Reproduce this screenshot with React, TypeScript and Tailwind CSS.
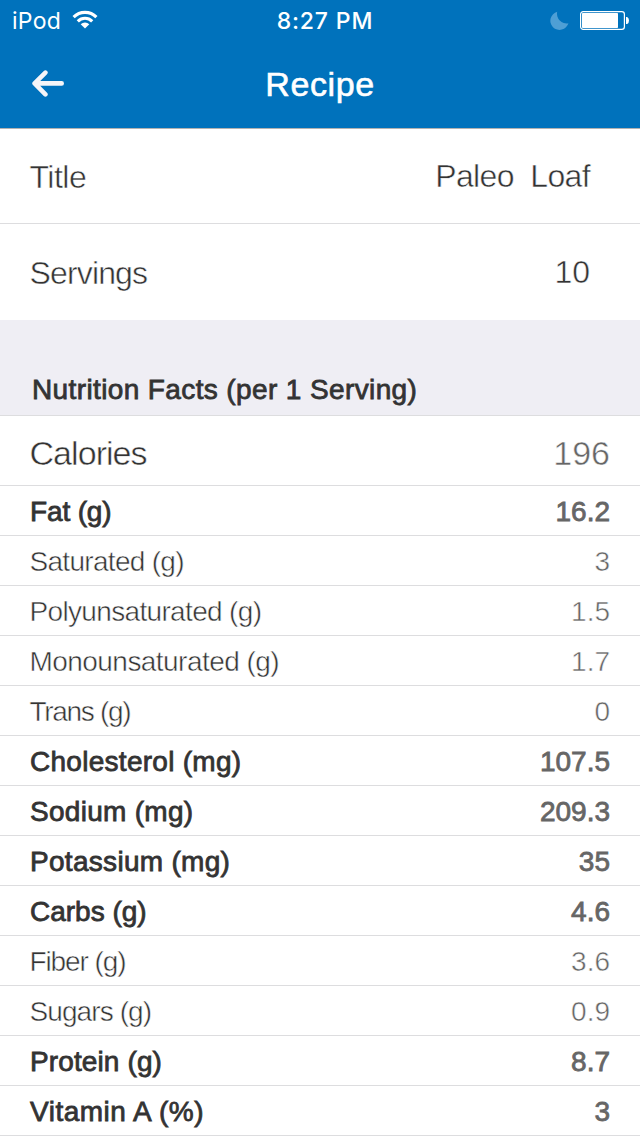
type Fact = { label: string; value: string; track: string; major?: boolean };

const facts: Fact[] = [
  { label: "Fat (g)", value: "16.2", track: "tracking-[-0.15px]", major: true },
  { label: "Saturated (g)", value: "3", track: "tracking-[-0.7px]" },
  { label: "Polyunsaturated (g)", value: "1.5", track: "tracking-[-0.66px]" },
  { label: "Monounsaturated (g)", value: "1.7", track: "tracking-[-0.55px]" },
  { label: "Trans (g)", value: "0", track: "tracking-[-1.3px]" },
  { label: "Cholesterol (mg)", value: "107.5", track: "tracking-[0.28px]", major: true },
  { label: "Sodium (mg)", value: "209.3", track: "tracking-[0.28px]", major: true },
  { label: "Potassium (mg)", value: "35", track: "tracking-[0.3px]", major: true },
  { label: "Carbs (g)", value: "4.6", track: "tracking-[0px]", major: true },
  { label: "Fiber (g)", value: "3.6", track: "tracking-[-1.1px]" },
  { label: "Sugars (g)", value: "0.9", track: "tracking-[-0.9px]" },
  { label: "Protein (g)", value: "8.7", track: "tracking-[0.12px]", major: true },
  { label: "Vitamin A (%)", value: "3", track: "tracking-[0.5px]", major: true },
];

const light = "[-webkit-text-stroke:0.5px_#ffffff]";
const medium = "[-webkit-text-stroke:0.8px_currentColor]";

function StatusBar() {
  return (
    <div className="grid h-10 grid-cols-3 items-center pl-3 pr-[11px] font-['Inter',sans-serif] text-[23px] leading-9">
      <div className="flex items-center gap-[11px]">
        <span className="pt-px tracking-[0.3px]">iPod</span>
        <svg className="mb-px h-[19px] w-[26px]" viewBox="0 0 26 19" fill="none" stroke="white" strokeWidth="3.1">
          <path d="M1.6 7.1A16 16 0 0 1 24.4 7.1" />
          <path d="M5.8 11.3A10.2 10.2 0 0 1 20.2 11.3" />
          <path d="M13 18.6L8.7 14.3A6.2 6.2 0 0 1 17.3 14.3Z" fill="white" stroke="none" />
        </svg>
      </div>
      <span className="pl-[9px] pt-[2px] text-center font-medium tracking-[0.85px]">8:27 PM</span>
      <div className="flex items-center justify-end gap-[11px]">
        <svg className="h-[19px] w-[19px]" viewBox="0 0 19 19" fill="#4e9fd5">
          <path d="M7.2 0.8A9.2 9.2 0 1 0 18.4 12.2A9.6 9.6 0 0 1 7.2 0.8Z" />
        </svg>
        <svg className="h-[19px] w-[49px]" viewBox="0 0 49 19">
          <rect x="0.6" y="0.6" width="43.8" height="17.8" rx="2.6" fill="none" stroke="white" strokeWidth="1.2" />
          <rect x="2" y="2" width="36" height="15" rx="0.8" fill="white" />
          <path d="M46 6h1.2q1.8 1 1.8 3.5t-1.8 3.5H46Z" fill="white" />
        </svg>
      </div>
    </div>
  );
}

export default function App() {
  return (
    <div className="flex h-[1136px] w-[640px] flex-col overflow-hidden bg-white font-['Liberation_Sans',Arial,sans-serif] text-[#333333]">
      <header className="h-[129px] shrink-0 border-b border-[#b2b2b2] bg-[#0072bc] text-white">
        <StatusBar />
        <div className="grid h-[88px] grid-cols-[1fr_auto_1fr] items-center px-8">
          <button aria-label="Back" className="w-8">
            <svg className="h-8 w-8" viewBox="0 0 32 32" fill="none" stroke="#f5f5f8" strokeWidth="4.6" strokeLinecap="round" strokeLinejoin="round">
              <path d="M13.4 4.6L2.6 15.4L13.4 26.4M3.2 15.4H29.7" />
            </svg>
          </button>
          <h1 className="text-[34px] leading-[88px] tracking-[0.6px] [-webkit-text-stroke:0.6px_white]">Recipe</h1>
        </div>
      </header>

      <section className={`shrink-0 text-[32px] ${light}`}>
        <div className="flex h-[95px] items-center justify-between border-b border-[#dddddf] pl-[29.5px] pr-[50px]">
          <span className="pt-0.5 tracking-[-0.5px]">Title</span>
          <span className="whitespace-pre tracking-[-0.65px]">Paleo  Loaf</span>
        </div>
        <div className="flex h-24 items-center justify-between pl-[29.5px] pr-[50px]">
          <span className="pt-0.5 tracking-[-0.85px]">Servings</span>
          <span>10</span>
        </div>
      </section>

      <h2 className={`flex h-24 shrink-0 items-end border-b border-[#dddddf] bg-[#efeef4] pb-[9px] pl-8 text-[28px] leading-8 tracking-[0.38px] ${medium}`}>
        Nutrition Facts (per 1 Serving)
      </h2>

      <section className="shrink-0">
        <div className={`flex h-[70px] items-center justify-between border-b border-[#dddddf] pl-[29.5px] pr-[30px] pt-1.5 text-[34px] ${light}`}>
          <span className="tracking-[-0.95px]">Calories</span>
          <span className="text-[#666666]">196</span>
        </div>
        {facts.map((f) => (
          <div
            key={f.label}
            className={`flex h-[50px] items-center justify-between border-b border-[#dddddf] pr-[30px] pt-0.5 text-[28px] ${f.major ? "pl-[30px]" : "pl-[29.5px]"} ${f.major ? medium : light}`}
          >
            <span className={f.track}>{f.label}</span>
            <span className="text-[#666666]">{f.value}</span>
          </div>
        ))}
      </section>
    </div>
  );
}
